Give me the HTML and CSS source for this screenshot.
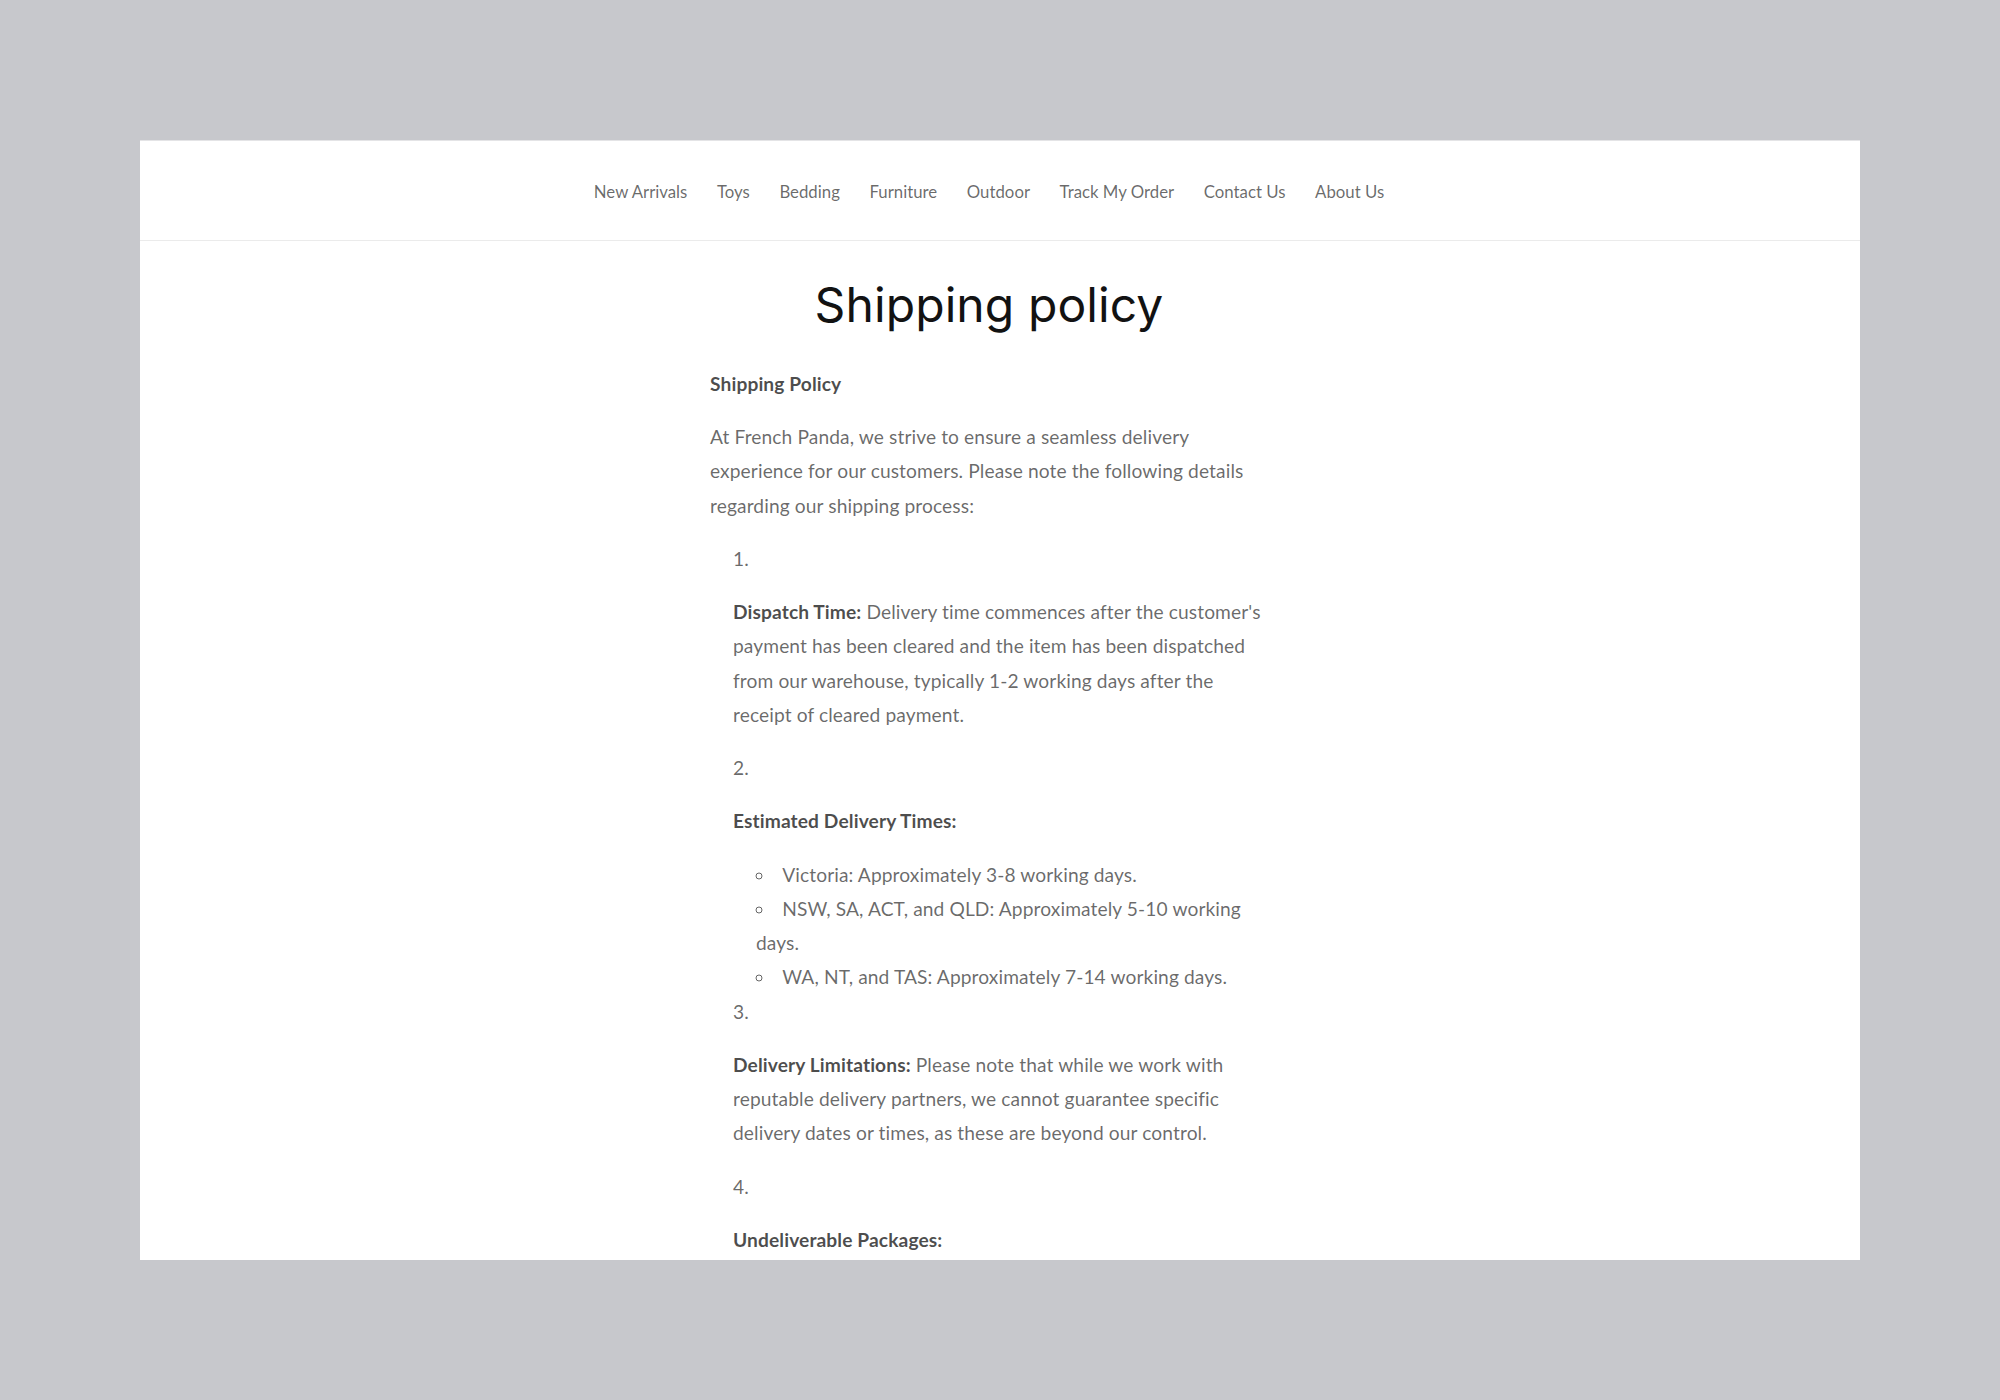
FILE: index.html
```html
<!DOCTYPE html>
<html lang="en">
<head>
<meta charset="utf-8">
<title>Shipping policy</title>
<link rel="stylesheet" href="styles.css">
</head>
<body>
<div class="screen">
  <div class="window">
    <header class="site-header">
      <nav class="menu-nav">
        <ul class="menu">
          <li><a class="menu-item" href="#">New Arrivals</a></li>
          <li><a class="menu-item" href="#">Toys</a></li>
          <li><a class="menu-item" href="#">Bedding</a></li>
          <li><a class="menu-item" href="#">Furniture</a></li>
          <li><a class="menu-item" href="#">Outdoor</a></li>
          <li><a class="menu-item" href="#">Track My Order</a></li>
          <li><a class="menu-item" href="#">Contact Us</a></li>
          <li><a class="menu-item" href="#">About Us</a></li>
        </ul>
      </nav>
    </header>
    <div class="content">
      <main class="main">
        <h1 class="title">Shipping policy</h1>
        <div class="rte">
          <p><strong>Shipping Policy</strong></p>
          <p>At French Panda, we strive to ensure a seamless delivery experience for our customers. Please note the following details regarding our shipping process:</p>
          <ol>
            <li><p><strong>Dispatch Time:</strong> Delivery time commences after the customer's payment has been cleared and the item has been dispatched from our warehouse, typically 1-2 working days after the receipt of cleared payment.</p></li>
            <li><p><strong>Estimated Delivery Times:</strong></p>
              <ul>
                <li>Victoria: Approximately 3-8 working days.</li>
                <li>NSW, SA, ACT, and QLD: Approximately 5-10 working days.</li>
                <li>WA, NT, and TAS: Approximately 7-14 working days.</li>
              </ul>
            </li>
            <li><p><strong>Delivery Limitations:</strong> Please note that while we work with reputable delivery partners, we cannot guarantee specific delivery dates or times, as these are beyond our control.</p></li>
            <li><p><strong>Undeliverable Packages:</strong></p></li>
          </ol>
        </div>
      </main>
    </div>
  </div>
</div>
</body>
</html>
```

FILE: styles.css
```css
html, body {
  margin: 0;
  padding: 0;
}

body {
  background: #c7c8cc;
  font-family: Lato, "Liberation Sans", sans-serif;
}

.screen {
  padding: 140px;
}

.window {
  width: 1720px;
  height: 1120px;
  background: #ffffff;
  overflow: hidden;
  box-sizing: border-box;
  border-top: 1px solid #e4e4e6;
}

.site-header {
  height: 100px;
  border-bottom: 1px solid #ebebeb;
  padding-right: 22px;
  padding-top: 2px;
  box-sizing: border-box;
  display: flex;
  align-items: center;
  justify-content: center;
}

.menu {
  list-style: none;
  margin: 0;
  padding: 0;
  display: flex;
  align-items: center;
}

.menu-item {
  display: block;
  padding: 0 14.8px;
  font-size: 16.8px;
  line-height: 22px;
  letter-spacing: 0;
  color: rgba(18, 18, 18, 0.64);
  text-decoration: none;
}

.content {
  padding-right: 22px;
}

.main {
  width: 558px;
  margin: 0 auto;
}

.title {
  margin: 32.5px 0 31px;
  text-align: center;
  font-family: Inter, "Noto Sans", sans-serif;
  font-weight: 400;
  font-size: 48px;
  line-height: 1.3;
  letter-spacing: 0.1px;
  color: #121212;
}

.rte {
  font-size: 19.2px;
  line-height: 34.25px;
  letter-spacing: 0.1px;
  color: rgba(18, 18, 18, 0.64);
}

.rte p {
  margin: 19px 0;
}

.rte strong {
  font-weight: 700;
  color: rgba(18, 18, 18, 0.76);
}

.rte ol,
.rte ul {
  list-style-position: inside;
  padding-left: 23px;
  margin: 0;
}

.rte ul {
  list-style-type: circle;
}
```
